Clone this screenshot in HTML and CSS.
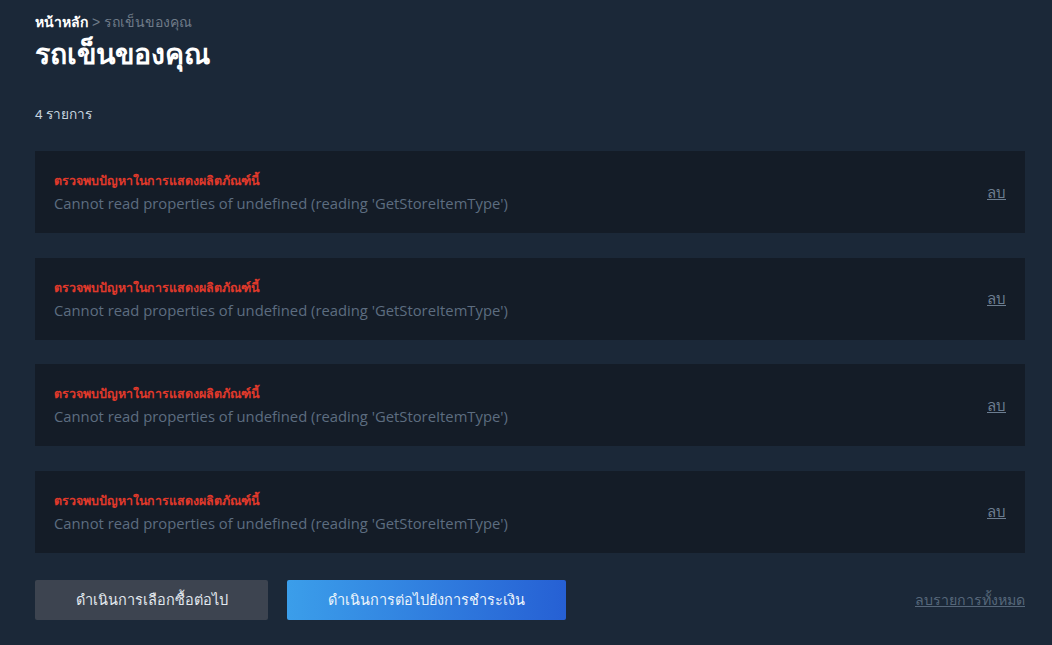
FILE: index.html
```html
<!DOCTYPE html>
<html lang="th">
<head>
<meta charset="utf-8">
<link rel="stylesheet" href="styles.css">
</head>
<body>
<div class="page">
  <div class="breadcrumb"><a class="crumb-home">หน้าหลัก</a> &gt; รถเข็นของคุณ</div>
  <h1 class="title">รถเข็นของคุณ</h1>
  <div class="count">4 รายการ</div>
  <div class="items">
    <div class="item">
      <div class="item-text">
        <div class="item-error">ตรวจพบปัญหาในการแสดงผลิตภัณฑ์นี้</div>
        <div class="item-msg">Cannot read properties of undefined (reading 'GetStoreItemType')</div>
      </div>
      <a class="remove">ลบ</a>
    </div>
    <div class="item">
      <div class="item-text">
        <div class="item-error">ตรวจพบปัญหาในการแสดงผลิตภัณฑ์นี้</div>
        <div class="item-msg">Cannot read properties of undefined (reading 'GetStoreItemType')</div>
      </div>
      <a class="remove">ลบ</a>
    </div>
    <div class="item">
      <div class="item-text">
        <div class="item-error">ตรวจพบปัญหาในการแสดงผลิตภัณฑ์นี้</div>
        <div class="item-msg">Cannot read properties of undefined (reading 'GetStoreItemType')</div>
      </div>
      <a class="remove">ลบ</a>
    </div>
    <div class="item">
      <div class="item-text">
        <div class="item-error">ตรวจพบปัญหาในการแสดงผลิตภัณฑ์นี้</div>
        <div class="item-msg">Cannot read properties of undefined (reading 'GetStoreItemType')</div>
      </div>
      <a class="remove">ลบ</a>
    </div>
  </div>
  <div class="actions">
    <button class="btn btn-secondary">ดำเนินการเลือกซื้อต่อไป</button>
    <button class="btn btn-primary">ดำเนินการต่อไปยังการชำระเงิน</button>
    <a class="remove-all">ลบรายการทั้งหมด</a>
  </div>
</div>
</body>
</html>
```

FILE: styles.css
```css
html, body {
  margin: 0;
  padding: 0;
  background: #1b2838;
}
body {
  font-family: "Liberation Sans", Arial, "Noto Sans", sans-serif;
  color: #c6d4df;
}
.page {
  padding: 13px 27px 0 35px;
}
.breadcrumb {
  font-size: 14px;
  line-height: 18px;
  color: #6f7b88;
}
.crumb-home {
  color: #ffffff;
  font-weight: bold;
}
.title {
  margin: 6px 0 0 0;
  font-size: 28.5px;
  line-height: 34px;
  font-weight: bold;
  color: #ffffff;
}
.count {
  margin-top: 35px;
  font-size: 13.7px;
  line-height: 18px;
  color: #c6d4df;
}
.items {
  margin-top: 27px;
  display: flex;
  flex-direction: column;
  gap: 24.5px;
}
.item {
  background: #141c27;
  height: 82px;
  box-sizing: border-box;
  padding: 1px 19px 0 19px;
  display: flex;
  align-items: center;
  justify-content: space-between;
}
.item-error {
  color: #e0392b;
  font-size: 12.4px;
  font-weight: bold;
  line-height: 21px;
}
.item-msg {
  font-family: "Open Sans", "Liberation Sans", sans-serif;
  color: #5d6d80;
  font-size: 14.8px;
  line-height: 22px;
}
.remove {
  color: #6c7d90;
  font-size: 15px;
  text-decoration: underline;
  cursor: pointer;
}
.actions {
  margin-top: 27px;
  display: flex;
  align-items: center;
  gap: 19px;
}
.btn {
  height: 40px;
  border: none;
  border-radius: 2px;
  font-family: inherit;
  font-size: 14.5px;
  color: #e2e8ee;
  cursor: pointer;
  padding: 0;
}
.btn-secondary {
  width: 233px;
  background: #3d4450;
}
.btn-primary {
  width: 279px;
  background: linear-gradient(90deg, #3b9eea 0%, #2660d4 100%);
  color: #eaf3fb;
}
.remove-all {
  margin-left: auto;
  font-size: 14.2px;
  color: #56677a;
  text-decoration: underline;
  cursor: pointer;
}
```
